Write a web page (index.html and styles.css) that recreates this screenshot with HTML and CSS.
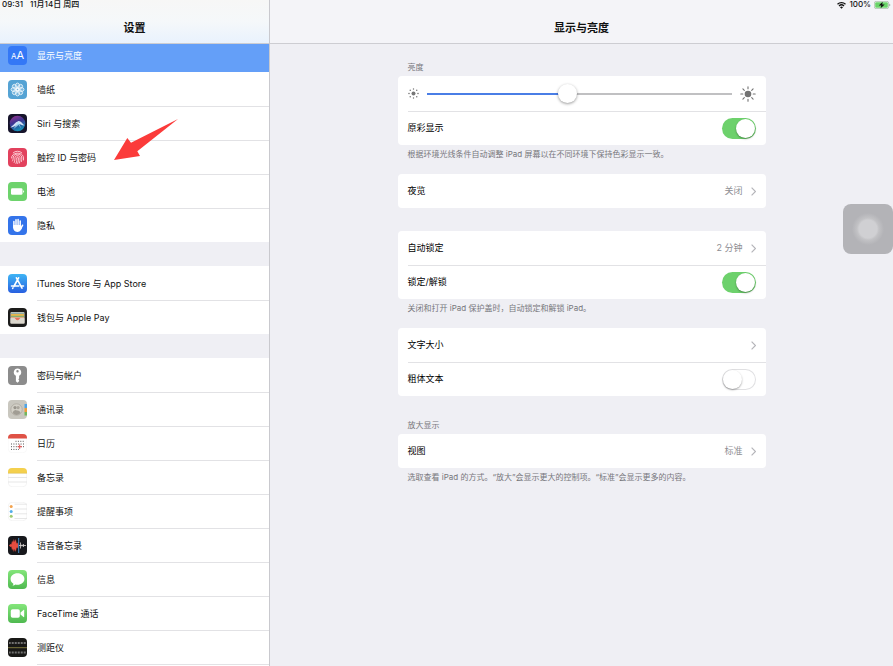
FILE: index.html
```html
<!DOCTYPE html>
<html lang="zh-CN">
<head>
<meta charset="utf-8">
<meta name="viewport" content="width=device-width, initial-scale=1">
<title>设置</title>
<link rel="stylesheet" href="styles.css">
</head>
<body>
<div class="app">
  <aside class="sidebar">
    <header class="bar bar-side">
      <div class="status"><span>09:31</span><span>11月14日 周四</span></div>
      <h1 class="title">设置</h1>
    </header>
    <nav class="menu">
      <div class="group group-first">
        <a class="item selected" href="#"><svg class="icon" viewBox="0 0 19 19"><rect width="19" height="19" rx="4" fill="#3478f6"/><text x="3" y="13" font-size="8" fill="#fff">A</text><text x="8.500" y="13" font-size="11" fill="#fff">A</text></svg><span class="name">显示与亮度</span></a>
        <a class="item" href="#"><svg class="icon" viewBox="0 0 19 19"><rect width="19" height="19" rx="4" fill="#55a3d4"/><g fill="#fff" fill-opacity=".22" stroke="#fff" stroke-width=".7"><ellipse cx="9.500" cy="5.700" rx="2" ry="2.700"/><ellipse cx="9.500" cy="5.700" rx="2" ry="2.700" transform="rotate(45 9.500 9.500)"/><ellipse cx="9.500" cy="5.700" rx="2" ry="2.700" transform="rotate(90 9.500 9.500)"/><ellipse cx="9.500" cy="5.700" rx="2" ry="2.700" transform="rotate(135 9.500 9.500)"/><ellipse cx="9.500" cy="5.700" rx="2" ry="2.700" transform="rotate(180 9.500 9.500)"/><ellipse cx="9.500" cy="5.700" rx="2" ry="2.700" transform="rotate(225 9.500 9.500)"/><ellipse cx="9.500" cy="5.700" rx="2" ry="2.700" transform="rotate(270 9.500 9.500)"/><ellipse cx="9.500" cy="5.700" rx="2" ry="2.700" transform="rotate(315 9.500 9.500)"/><circle cx="9.500" cy="9.500" r="1.600"/></g></svg><span class="name">墙纸</span></a>
        <a class="item" href="#"><svg class="icon" viewBox="0 0 19 19"><defs><linearGradient id="siri" x1="0" y1="0" x2=".4" y2="1"><stop offset="0" stop-color="#a3358f"/><stop offset=".5" stop-color="#3c3391"/><stop offset="1" stop-color="#168bb4"/></linearGradient></defs><rect width="19" height="19" rx="4" fill="#16142b"/><circle cx="9.500" cy="9.500" r="7.800" fill="url(#siri)"/><path d="M2 13.500C6 11.500 6.500 8.500 10.500 7c2.500-.3 3.500 2.500 6 4.500-3 0-4-1.500-5.500-1.500-2 .3-3.500 3-9 3.500z" fill="#e7efff" opacity=".9"/><path d="M5.500 15L10.500 7l2.500 7.500-2.300-3.500z" fill="#a5e4f5" opacity=".75"/></svg><span class="name">Siri 与搜索</span></a>
        <a class="item" href="#"><svg class="icon" viewBox="0 0 19 19"><rect width="19" height="19" rx="4" fill="#e2415d"/><g fill="none" stroke="#ffdce2" stroke-width=".85" stroke-linecap="round"><path d="M5.200 4.800a6.300 6.300 0 0 1 8.600 0M3.500 10c0-6.500 12-6.500 12 0v2M4.500 13c.8-1.200.5-2.500.8-4 .8-3.800 7.600-3.700 8.400 0 .2 1.500.1 3-.2 4.500M6.200 14.500c.9-2 .6-3.500.8-5 .4-2.500 4.500-2.500 5 0 .2 2 0 3.500-.5 5.500M8 15.500c1-2.500.6-4 .7-5.500.2-1.200 1.500-1.200 1.700 0 .1 2-.1 3.700-.7 5.500"/></g></svg><span class="name">触控 ID 与密码</span></a>
        <a class="item" href="#"><svg class="icon" viewBox="0 0 19 19"><rect width="19" height="19" rx="4" fill="#6dd36c"/><rect x="3" y="6.200" width="11.500" height="6.600" rx="1.300" fill="#fff"/><path d="M15.100 8.200c1.400.3 1.400 2.300 0 2.600z" fill="#fff"/></svg><span class="name">电池</span></a>
        <a class="item" href="#"><svg class="icon" viewBox="0 0 19 19"><rect width="19" height="19" rx="4" fill="#3474ea"/><g stroke="#fff" stroke-width="1.500" stroke-linecap="round" fill="none"><path d="M5.900 5.500v6M8 3.800v7M10.100 3.500v7M12.200 4.900v6M14.600 9.200l-1.600 3"/></g><path d="M5.150 9h7.800v2l1.200-.5c0 2.200-1.700 5.500-4.700 5.500-3 0-4.300-2.200-4.300-4.700z" fill="#fff"/></svg><span class="name">隐私</span></a>
      </div>
      <div class="group">
        <a class="item" href="#"><svg class="icon" viewBox="0 0 19 19"><defs><linearGradient id="store" x2="0" y2="1"><stop stop-color="#3eb5f5"/><stop offset="1" stop-color="#285fe0"/></linearGradient></defs><rect width="19" height="19" rx="4" fill="url(#store)"/><g stroke="#fff" stroke-width="1.600" stroke-linecap="round" fill="none"><path d="M8.400 3.800l5.600 10.400M10.600 3.800L5.800 12.500M3.500 12h7.300M13.600 12h1.900M4.700 14.300l.2-.3"/></g></svg><span class="name">iTunes Store 与 App Store</span></a>
        <a class="item" href="#"><svg class="icon" viewBox="0 0 19 19"><rect width="19" height="19" rx="4" fill="#1c1c1b"/><rect x="2.500" y="4" width="14" height="11.500" rx="1" fill="#ddd9cf"/><path d="M3 4.500h13v2H3z" fill="#8ea9a6"/><path d="M3 6h13v2H3z" fill="#e5b64c"/><path d="M3 7.800h13v1.500H3z" fill="#85b070"/><path d="M3 9.200h13v1H3z" fill="#e3a07f"/><path d="M6.500 10h6l-1 2-2 1.200-2-1.200z" fill="#e3745f"/><path d="M2.500 10.200h4c1 0 1.200 2 3 2s2-2 3-2h4v5.300h-14z" fill="#dcd8ce"/></svg><span class="name">钱包与 Apple Pay</span></a>
      </div>
      <div class="group group-last">
        <a class="item" href="#"><svg class="icon" viewBox="0 0 19 19"><rect width="19" height="19" rx="4" fill="#8c8c8c"/><path fill-rule="evenodd" d="M9.500 2.500a3.800 3.800 0 0 0-1.600 7.200v5.500l1.600 1.600 1.600-1.600v-1l-.8-.9.800-.9v-2.700a3.800 3.800 0 0 0-1.600-7.200zm0 1.600a1.200 1.200 0 1 1 0 2.400 1.200 1.200 0 0 1 0-2.400z" fill="#fff"/></svg><span class="name">密码与帐户</span></a>
        <a class="item" href="#"><svg class="icon" viewBox="0 0 19 19"><rect width="19" height="19" rx="4" fill="#c9c7bf"/><path d="M16.500 4H19v4h-2.500z" fill="#4fa4e6"/><path d="M16.500 8H19v4h-2.500z" fill="#ee9c3b"/><path d="M16.500 12H19v3.500h-2.500z" fill="#73b65c"/><circle cx="8.500" cy="9.500" r="5.700" fill="#d3d0c7" stroke="#a7a49b" stroke-width=".7"/><circle cx="7" cy="7.600" r="1.600" fill="#99958c"/><circle cx="10.100" cy="7.600" r="1.600" fill="#aaa69d"/><path d="M4.700 13c.2-3 4.500-4 4-2 .8-1 3.700 0 3.800 2-2.500 2.500-5.500 2.500-7.800 0z" fill="#a19d94"/></svg><span class="name">通讯录</span></a>
        <a class="item" href="#"><svg class="icon" viewBox="0 0 19 19"><rect x=".25" y=".25" width="18.500" height="18.500" rx="4" fill="#fff" stroke="#f2f2f2" stroke-width=".5"/><path d="M0 4.500V4a4 4 0 0 1 4-4h11a4 4 0 0 1 4 4v.5z" fill="#df5246"/><g stroke="#555" stroke-width="1" stroke-dasharray="1 1.400"><path d="M7.500 7.300h9M3 10h13.500M3 12.700h13.500M3 15.400h8"/></g><path d="M9.500 12.700h4.500M11.700 10.500v4.400" stroke="#e45252" stroke-width="1"/></svg><span class="name">日历</span></a>
        <a class="item" href="#"><svg class="icon" viewBox="0 0 19 19"><rect x=".25" y=".25" width="18.500" height="18.500" rx="4" fill="#fff" stroke="#e8e8e8" stroke-width=".5"/><path d="M0 5V4a4 4 0 0 1 4-4h11a4 4 0 0 1 4 4v1z" fill="#f4d04e"/><path d="M0 5.300h19" stroke="#d7b744" stroke-width=".6"/><path d="M0 9.500h19M0 14h19" stroke="#ddd" stroke-width=".7"/></svg><span class="name">备忘录</span></a>
        <a class="item" href="#"><svg class="icon" viewBox="0 0 19 19"><rect x=".25" y=".25" width="18.500" height="18.500" rx="4" fill="#fff" stroke="#e8e8e8" stroke-width=".5"/><circle cx="3.200" cy="4.500" r="1.500" fill="#f3a34e"/><circle cx="3.200" cy="9.400" r="1.500" fill="#52aeea"/><circle cx="3.200" cy="14.300" r="1.500" fill="#9fcb72"/><path d="M6.500 2.200H19M6.500 7H19M6.500 11.800H19M6.500 16.500H19" stroke="#ddd" stroke-width=".7"/></svg><span class="name">提醒事项</span></a>
        <a class="item" href="#"><svg class="icon" viewBox="0 0 19 19"><rect width="19" height="19" rx="4" fill="#17181c"/><path d="M1 9.500l1.500-1.500.8.500.8-4 .8 2 1-3.500.9 3 1-3 .8 4.500.9-1 .8 3-.8 3-.9-1-.8 4.500-1-3-.9 3-1-3.500-.8 2-.8-4-.8.600z" fill="#e74d40"/><path d="M10.700 2v15" stroke="#4b99dd" stroke-width=".9"/><path d="M11 9.500h7M12.500 6.500v6M14 8.500v2M15.500 8v3" stroke="#d9d4d2" stroke-width=".8"/></svg><span class="name">语音备忘录</span></a>
        <a class="item" href="#"><svg class="icon" viewBox="0 0 19 19"><defs><linearGradient id="green" x2="0" y2="1"><stop stop-color="#84e67b"/><stop offset="1" stop-color="#4fb950"/></linearGradient></defs><rect width="19" height="19" rx="4" fill="url(#green)"/><path d="M9.500 3.200c-4 0-6.900 2.500-6.900 5.800 0 2 1 3.700 2.800 4.700 0 .9-.4 1.600-1 2.100 1.200 0 2.200-.5 2.900-1.200 5.200.9 9.100-1.800 9.100-5.600 0-3.300-2.900-5.800-6.900-5.800z" fill="#fff"/></svg><span class="name">信息</span></a>
        <a class="item" href="#"><svg class="icon" viewBox="0 0 19 19"><rect width="19" height="19" rx="4" fill="url(#green)"/><rect x="2.800" y="5.200" width="9" height="8.600" rx="1.800" fill="#fff"/><path d="M12.500 8.500l3-2.600c.4-.3.700-.1.700.3v6.600c0 .4-.3.600-.7.300l-3-2.600z" fill="#fff"/></svg><span class="name">FaceTime 通话</span></a>
        <a class="item" href="#"><svg class="icon" viewBox="0 0 19 19"><rect width="19" height="19" rx="4" fill="#181816"/><g stroke="#999" fill="none"><path d="M1 5h17" stroke-dasharray=".7 .8" stroke-width="2"/><path d="M1 14.500h17" stroke-dasharray=".7 .8" stroke-width="2"/></g><path d="M0 9.700h19" stroke="#a89f4c" stroke-width=".7"/></svg><span class="name">测距仪</span></a>
      </div>
    </nav>
  </aside>
  <main class="detail">
    <header class="bar bar-main">
      <div class="status status-end">
        <svg class="wifi" viewBox="0 0 9 8"><g fill="none" stroke="#111" stroke-width="1.300"><path d="M.5 3.200a5.800 5.800 0 0 1 8 0M2 5a3.600 3.600 0 0 1 5 0"/></g><path d="M4.500 7.700L3 6.200a2.100 2.100 0 0 1 3 0z" fill="#111"/></svg>
        <span>100%</span>
        <svg class="battery" viewBox="0 0 17 8"><rect x=".4" y=".4" width="14.200" height="7.200" rx="1.800" fill="#fff" stroke="#8aa58a" stroke-width=".6"/><rect x="1.200" y="1.200" width="12.600" height="5.600" rx="1.100" fill="#6ad46a"/><path d="M15.400 2.700c1.200.4 1.200 2.200 0 2.600z" fill="#8aa58a"/><path d="M8.700.8L4.800 4.500h2.500l-.7 2.700L10.700 3.500H8.200z" fill="#111"/></svg>
      </div>
      <h2 class="title">显示与亮度</h2>
    </header>
    <div class="panel">
      <section class="block">
        <h3 class="caption">亮度</h3>
        <div class="card">
          <div class="row row-slider">
            <svg class="sun-small" viewBox="0 0 11 11"><circle cx="5.500" cy="5.500" r="2" fill="#777"/><g stroke="#777" stroke-width="1.400" stroke-linecap="round"><path d="M5.500 .9v.2M5.500 9.900v.2M.9 5.500h.2M9.900 5.500h.2M2.200 2.200l.1.100M8.700 8.700l.1.100M2.200 8.800l.1-.1M8.700 2.300l.1-.1"/></g></svg>
            <input class="slider" type="range" min="0" max="100" value="46" aria-label="亮度">
            <svg class="sun-large" viewBox="0 0 16 16"><circle cx="8" cy="8" r="3.300" fill="#727272"/><g stroke="#727272" stroke-width="1.100" stroke-linecap="round"><path d="M8 .8v2M8 13.200v2M.8 8h2M13.200 8h2M2.900 2.900l1.400 1.400M11.700 11.700l1.400 1.400M2.900 13.100l1.400-1.400M11.700 4.300l1.400-1.400"/></g></svg>
          </div>
          <div class="row"><label class="label" for="tone">原彩显示</label><input class="switch" id="tone" type="checkbox" checked></div>
        </div>
        <p class="note">根据环境光线条件自动调整 iPad 屏幕以在不同环境下保持色彩显示一致。</p>
      </section>
      <section class="block">
        <div class="card">
          <a class="row" href="#"><span class="label">夜览</span><span class="value">关闭</span><svg class="chevron" viewBox="0 0 5 9"><path d="M.6 .6l3.900 3.900L.6 8.400"/></svg></a>
        </div>
      </section>
      <section class="block">
        <div class="card">
          <a class="row" href="#"><span class="label">自动锁定</span><span class="value">2 分钟</span><svg class="chevron" viewBox="0 0 5 9"><path d="M.6 .6l3.900 3.900L.6 8.400"/></svg></a>
          <div class="row"><label class="label" for="lock">锁定/解锁</label><input class="switch" id="lock" type="checkbox" checked></div>
        </div>
        <p class="note">关闭和打开 iPad 保护盖时，自动锁定和解锁 iPad。</p>
      </section>
      <section class="block">
        <div class="card">
          <a class="row" href="#"><span class="label">文字大小</span><svg class="chevron" viewBox="0 0 5 9"><path d="M.6 .6l3.900 3.900L.6 8.400"/></svg></a>
          <div class="row"><label class="label" for="bold">粗体文本</label><input class="switch" id="bold" type="checkbox"></div>
        </div>
      </section>
      <section class="block">
        <h3 class="caption">放大显示</h3>
        <div class="card">
          <a class="row" href="#"><span class="label">视图</span><span class="value">标准</span><svg class="chevron" viewBox="0 0 5 9"><path d="M.6 .6l3.900 3.900L.6 8.400"/></svg></a>
        </div>
        <p class="note">选取查看 iPad 的方式。“放大”会显示更大的控制项。“标准”会显示更多的内容。</p>
      </section>
    </div>
  </main>
  <svg class="arrow" viewBox="0 0 64 42" aria-hidden="true"><path d="M0 41L13.300 19l3.700 4.700L64 0 23.300 32.300l2.700 4.700z" fill="#fb3b3a"/></svg>
  <button class="assist" type="button" aria-label="辅助触控"></button>
</div>
</body>
</html>
```
FILE: styles.css
```css
* {
  box-sizing: border-box;
}

body {
  margin: 0;
  background: #efeff4;
  color: #111;
  font-family: Inter, "Noto Sans CJK SC", sans-serif;
  font-size: 9px;
  line-height: 12px;
}

h1, h2, h3, p {
  margin: 0;
}

a {
  color: inherit;
  text-decoration: none;
}

svg {
  display: block;
  flex: none;
}

.app {
  position: relative;
  display: flex;
  height: 100vh;
  overflow: hidden;
}

/* Panes */
.sidebar {
  display: flex;
  flex-direction: column;
  flex: none;
  width: 270px;
  border-right: 1px solid #c9c9ce;
  background: #fff;
}

.detail {
  flex: 1;
  min-width: 0;
}

.bar {
  flex: none;
  height: 44px;
  border-bottom: 1px solid #cdcdd2;
}

.bar-side {
  background: linear-gradient(#f7f7f6, #f5f8fa 50%, #e9f2fd);
}

.bar-main {
  background: #f4f4f8;
}

.status {
  display: flex;
  align-items: center;
  gap: 7px;
  height: 9px;
  padding: 0 2px;
  font-size: 8px;
  font-weight: 500;
  line-height: 9px;
}

.status-end {
  justify-content: flex-end;
  gap: 3px;
}

.wifi {
  width: 9px;
  height: 8px;
}

.battery {
  width: 17px;
  height: 8px;
}

.title {
  margin-top: 11px;
  font-size: 11px;
  font-weight: 600;
  line-height: 16px;
  text-align: center;
}

/* Sidebar menu */
.menu {
  flex: 1;
  min-height: 0;
  overflow: hidden;
}

.group {
  margin-bottom: 24px;
  box-shadow: 0 0 0 24px #efeff4;
}

.group-first {
  margin-top: -6px;
}

.group-last {
  margin-bottom: 0;
  box-shadow: none;
}

.group-last::after {
  display: block;
  margin-left: 37px;
  border-top: 1px solid #e2e2e5;
  content: "";
}

.item {
  display: flex;
  align-items: center;
  gap: 10px;
  height: 34px;
  padding-left: 8px;
  background: #fff;
}

.icon {
  width: 19px;
  height: 19px;
}

.name {
  flex: 1;
  height: 34px;
  border-top: 1px solid #e2e2e5;
  line-height: 34px;
}

.item:first-child .name,
.selected + .item .name {
  border-top-color: transparent;
}

.selected {
  background: #649ff8;
  color: #fff;
}

/* Detail panel */
.panel {
  max-width: 368px;
  margin: 0 auto;
  padding-top: 17px;
}

.block {
  margin-bottom: 23px;
}

.block:has(.note) {
  margin-bottom: 14px;
}

.caption,
.note {
  padding: 0 10px;
  color: #77777c;
  font-size: 8px;
  font-weight: 400;
  line-height: 12px;
}

.caption {
  margin-bottom: 3px;
}

.note {
  margin-top: 3px;
}

.card {
  border-radius: 4px;
  background: #fff;
}

.row {
  display: flex;
  align-items: center;
  gap: 8px;
  height: 34px;
  padding: 0 10px;
}

.row + .row {
  background: linear-gradient(#e2e2e5, #e2e2e5) 10px 0 / 100% 1px no-repeat;
}

.row-slider {
  height: 35px;
}

.label {
  flex: 1;
  color: #000;
}

.value {
  color: #8e8e93;
}

.chevron {
  width: 5px;
  height: 9px;
  fill: none;
  stroke: #b4b4b9;
  stroke-width: 1.2;
}

.sun-small {
  width: 11px;
  height: 11px;
}

.sun-large {
  width: 16px;
  height: 16px;
}

.slider {
  flex: 1;
  min-width: 0;
  height: 20px;
  margin: 0;
  appearance: none;
  background: linear-gradient(90deg, #4a7ee6 46%, #c0c0c2 46%) center / 100% 2px no-repeat;
}

.slider::-webkit-slider-thumb {
  width: 19px;
  height: 19px;
  appearance: none;
  border-radius: 50%;
  background: #fff;
  box-shadow: 0 1px 3px rgba(0, 0, 0, .4);
}

.switch {
  display: flex;
  flex: none;
  width: 34px;
  height: 21px;
  margin: 0;
  padding: 1px;
  appearance: none;
  border-radius: 11px;
  background: #fff;
  box-shadow: inset 0 0 0 1px #e0e0e2;
}

.switch::before {
  width: 19px;
  height: 19px;
  border-radius: 50%;
  background: #fff;
  box-shadow: 0 1px 2px rgba(0, 0, 0, .35);
  content: "";
}

.switch:checked {
  justify-content: flex-end;
  background: #6dd16c;
  box-shadow: none;
}

/* Overlays */
.arrow {
  position: absolute;
  top: 119px;
  left: 114px;
  width: 64px;
  height: 42px;
  pointer-events: none;
}

.assist {
  position: absolute;
  top: 204px;
  right: 0;
  width: 50px;
  height: 50px;
  padding: 0;
  border: 0;
  border-radius: 8px;
  background: radial-gradient(circle, #d0d0d3 0 9px, #c2c2c5 11px, #b3b3b7 16px);
}
```
